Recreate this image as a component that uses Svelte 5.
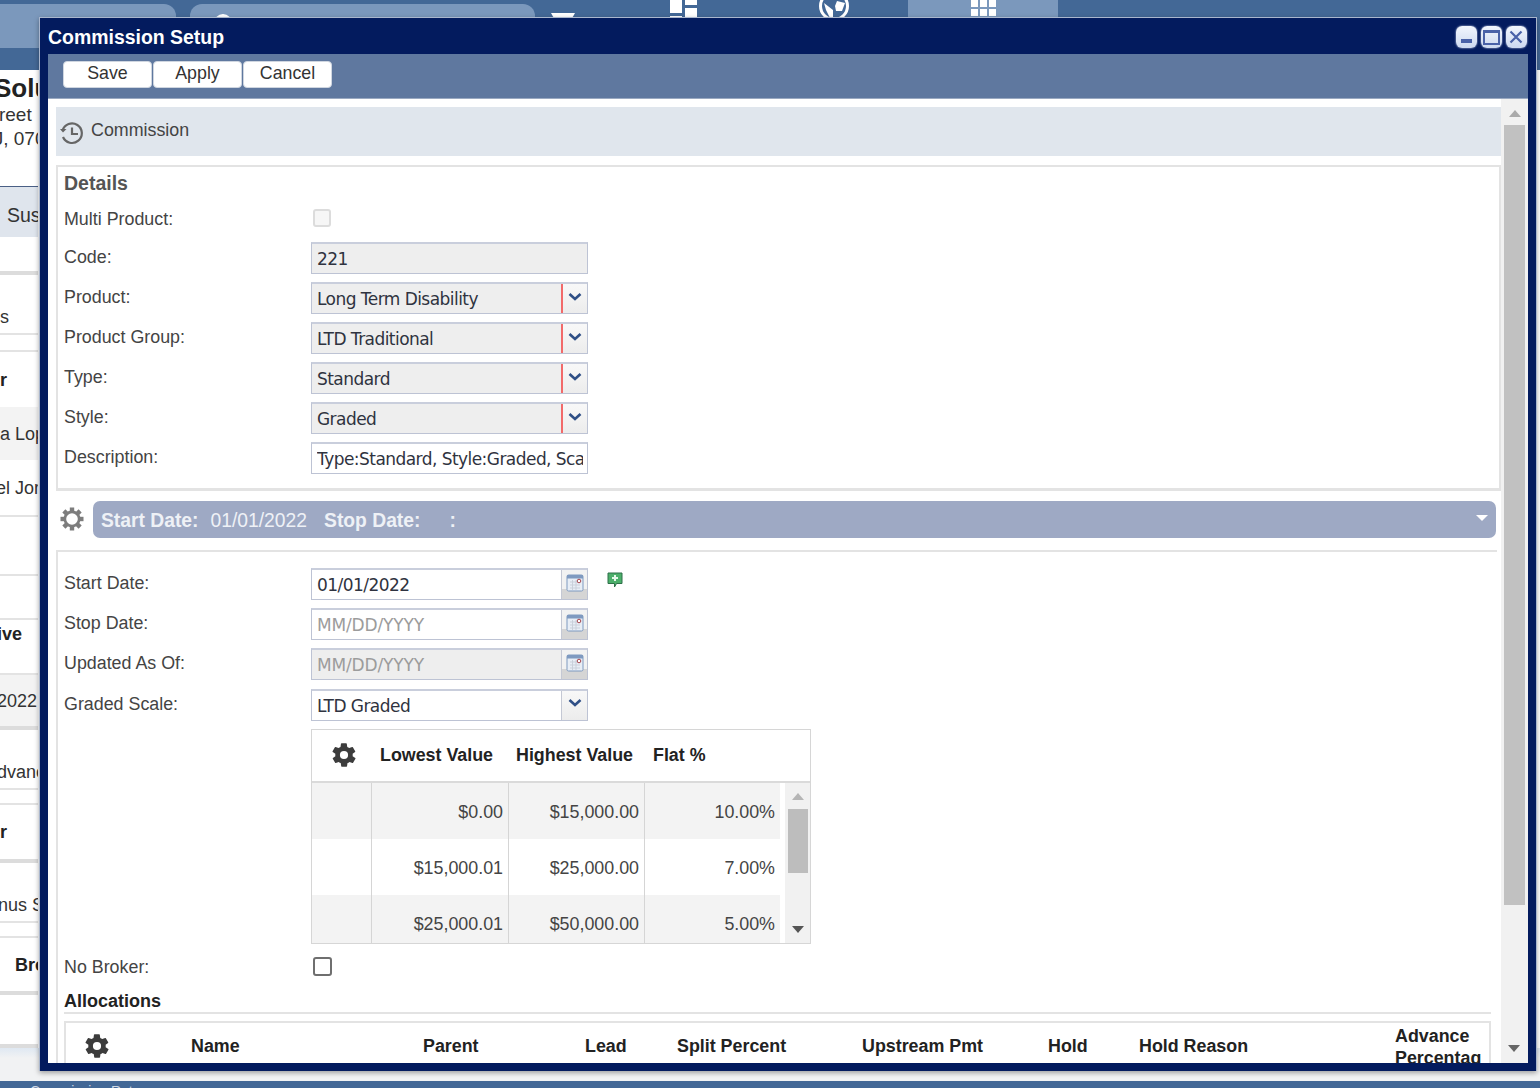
<script>
  const bgRows = [
    { h: 38, t: '', c: 'line2' },
    { h: 60, t: 's', c: 'low line' },
    { h: 17, t: '', c: 'line' },
    { h: 55, t: 'r', c: 'b' },
    { h: 53, t: 'a Lop', c: 'grey' },
    { h: 57, t: 'el Jor', c: 'line', x: -4 },
    { h: 59, t: '', c: 'line' },
    { h: 44, t: '', c: 'line' },
    { h: 55, t: 'ive', c: 'high b line', x: -3 },
    { h: 55, t: '2022', c: 'grey line2', x: -3 },
    { h: 60, t: 'dvance', c: 'low line', x: -3 },
    { h: 15, t: '', c: 'line' },
    { h: 58, t: 'r', c: 'b line2' },
    { h: 60, t: 'nus S', c: 'low line', x: -2 },
    { h: 15, t: '', c: 'line' },
    { h: 57, t: 'Broker', c: 'b line2', x: 15 },
    { h: 53, t: '', c: 'line2' }
  ];
  const details = [
    { l: 'Code:', v: '221', k: 'off' },
    { l: 'Product:', v: 'Long Term Disability', k: 'off', sel: true, req: true },
    { l: 'Product Group:', v: 'LTD Traditional', k: 'off', sel: true, req: true },
    { l: 'Type:', v: 'Standard', k: 'off', sel: true, req: true },
    { l: 'Style:', v: 'Graded', k: 'off', sel: true, req: true },
    { l: 'Description:', v: 'Type:Standard, Style:Graded, Scale:LTD Graded', k: '' }
  ];
  const dates = [
    { l: 'Start Date:', v: '01/01/2022', k: '', cal: true, add: true },
    { l: 'Stop Date:', v: 'MM/DD/YYYY', k: 'ph', cal: true },
    { l: 'Updated As Of:', v: 'MM/DD/YYYY', k: 'off ph', cal: true },
    { l: 'Graded Scale:', v: 'LTD Graded', k: '', sel: true }
  ];
  const scale = [
    ['$0.00', '$15,000.00', '10.00%'],
    ['$15,000.01', '$25,000.00', '7.00%'],
    ['$25,000.01', '$50,000.00', '5.00%']
  ];
  const cols = [
    ['Name', 232], ['Parent', 162], ['Lead', 92], ['Split Percent', 185],
    ['Upstream Pmt', 186], ['Hold', 91], ['Hold Reason', 256]
  ];
  const gear = 'M19.4 13a7.6 7.6 0 0 0 0-2l2.1-1.6a.5.5 0 0 0 .1-.6l-2-3.5a.5.5 0 0 0-.6-.2l-2.5 1a7.3 7.3 0 0 0-1.7-1l-.4-2.7a.5.5 0 0 0-.5-.4h-4a.5.5 0 0 0-.5.4l-.4 2.7a7.3 7.3 0 0 0-1.7 1l-2.5-1a.5.5 0 0 0-.6.2l-2 3.5a.5.5 0 0 0 .1.6L4.6 11a7.6 7.6 0 0 0 0 2l-2.1 1.6a.5.5 0 0 0-.1.6l2 3.5a.5.5 0 0 0 .6.2l2.5-1a7.3 7.3 0 0 0 1.7 1l.4 2.7a.5.5 0 0 0 .5.4h4a.5.5 0 0 0 .5-.4l.4-2.7a7.3 7.3 0 0 0 1.7-1l2.5 1a.5.5 0 0 0 .6-.2l2-3.5a.5.5 0 0 0-.1-.6zM12 15.500a3.500 3.500 0 1 1 0-7 3.500 3.500 0 0 1 0 7z';
</script>

{#snippet field(f)}
  <div class="frow">
    <span class="flabel">{f.l}</span>
    <div class="fbox {f.k}" class:req={f.req}>
      <span class="fval">{f.v}</span>
      {#if f.sel}
        <span class="fbtn"><svg width="14" height="8" viewBox="0 0 14 8"><path d="M1.500 1 7 6l5.500-5" fill="none" stroke="#2f4f86" stroke-width="2.600"/></svg></span>
      {/if}
      {#if f.cal}
        <span class="fbtn cal"><svg width="18" height="18" viewBox="0 0 18 18">
          <rect x="1" y="1" width="16" height="16" rx="1.500" fill="#e8eef6" stroke="#7f9ac0"/>
          <rect x="1" y="1" width="16" height="3.500" fill="#7f9ac0"/>
          <path d="M4 8h10M4 11h10M4 14h10M6.500 6v10M10 6v10" stroke="#c9d0da" stroke-width="1"/>
          <circle cx="13" cy="7" r="1.800" fill="#fff" stroke="#a5444c" stroke-width="1"/>
        </svg></span>
      {/if}
    </div>
    {#if f.add}
      <svg class="addi" width="17" height="16" viewBox="0 0 17 16">
        <path d="M1 1h14v10.500H9.500L7.500 15v-3.500H1z" fill="#4caf6a" stroke="#2d6f48" stroke-width="1"/>
        <path d="M8 3v6M5 6h6" stroke="#e6f7ea" stroke-width="2"/>
      </svg>
    {/if}
  </div>
{/snippet}

<div class="page">
  <header class="top">
    <div class="tabs">
      <div class="tab t1"></div>
      <div class="tab t2"><svg class="tabic" width="24" height="14" viewBox="0 0 24 14"><circle cx="11" cy="11" r="7.500" fill="none" stroke="#fff" stroke-width="3"/></svg></div>
      <svg class="filt" width="26" height="14" viewBox="0 0 26 14"><path d="M1 0h24L17 14H9z" fill="#fff"/></svg>
      <svg class="dash" width="30" height="19" viewBox="0 0 30 19"><path d="M1 0h12v13H1zM1 16h12v3H1zM16 0h12v5H16zM16 8h12v11H16z" fill="#fff"/></svg>
      <svg class="globe" width="32" height="19" viewBox="0 0 32 19"><circle cx="16" cy="6" r="13.500" fill="none" stroke="#fff" stroke-width="3"/><path d="M6 3l9 7v8h-3l-4-8zM19 1l8 2-3 8h-6l-1-5z" fill="#fff"/></svg>
      <div class="navsel"><span class="grid"><i></i><i></i><i></i><i></i><i></i><i></i></span></div>
    </div>
  </header>

  <section class="company">
    <div class="cname">Solutions</div>
    <div class="cline">Street</div>
    <div class="cline">NJ, 07000</div>
  </section>

  <div class="bgcol">
    <div class="sus">Suspense</div>
    {#each bgRows as r}
      <div class="bgrow {r.c}" style="height:{r.h}px;text-indent:{r.x || 0}px">{r.t}</div>
    {/each}
  </div>

  <div class="pagefoot"></div>
  <div class="pagebar">Commission Rates</div>

  <div class="win">
    <div class="wtitle">
      <span class="wname">Commission Setup</span>
      <div class="wbtns">
        <span class="wb"><i class="mn"></i></span>
        <span class="wb"><i class="mx"></i></span>
        <span class="wb cl"><svg width="16" height="16" viewBox="0 0 16 16"><path d="M2.500 2.500l11 11M13.500 2.500l-11 11" stroke="#4a62a8" stroke-width="2.200"/></svg></span>
      </div>
    </div>
    <div class="wtools">
      <button>Save</button><button>Apply</button><button>Cancel</button>
    </div>

    <div class="wbody">
      <div class="scroll">
        <div class="crumb">
          <svg width="24" height="24" viewBox="0 0 24 24"><path d="M2.600 9.500A9.800 9.800 0 1 1 3 16" fill="none" stroke="#666" stroke-width="2.200"/><path d="M0 8l3 3.500L6.500 8z" fill="#666"/><path d="M12 6.500V13h6" fill="none" stroke="#666" stroke-width="2.200"/></svg>
          <span>Commission</span>
        </div>

        <fieldset class="panel det">
          <div class="ptitle">Details</div>
          <div class="frow mp">
            <span class="flabel">Multi Product:</span>
            <span class="check dim"></span>
          </div>
          {#each details as f}{@render field(f)}{/each}
        </fieldset>

        <div class="datebar">
          <svg width="26" height="26" viewBox="0 0 26 26">
            {#each [0, 45, 90, 135] as a}
              <rect x="10.800" y="1.500" width="4.400" height="23" fill="#7d7d7d" transform="rotate({a} 13 13)"/>
            {/each}
            <circle cx="13" cy="13" r="8.500" fill="#7d7d7d"/>
            <circle cx="13" cy="13" r="5.800" fill="#fff"/>
          </svg>
          <div class="dpill">
            <b>Start Date:</b><span class="d1">01/01/2022</span><b class="d2">Stop Date:</b><span class="d3">:</span>
            <svg class="dcar" width="12" height="6" viewBox="0 0 12 6"><path d="M0 0h12L6 6z" fill="#fff"/></svg>
          </div>
        </div>

        <fieldset class="panel dt">
          {#each dates as f}{@render field(f)}{/each}

          <div class="grid-wrap">
            <div class="ghead">
              <svg class="gg" width="28" height="28" viewBox="0 0 24 24"><path d={gear} fill="#3c3c3c"/></svg>
              <b class="h1">Lowest Value</b><b class="h2">Highest Value</b><b class="h3">Flat %</b>
            </div>
            <div class="gbody">
              <div class="gcells">
                {#each scale as row}
                  <div class="grow">
                    <span class="c0"></span>
                    <span class="c1">{row[0]}</span>
                    <span class="c2">{row[1]}</span>
                    <span class="c3">{row[2]}</span>
                  </div>
                {/each}
              </div>
              <div class="gsb">
                <svg class="up" width="12" height="7" viewBox="0 0 12 7"><path d="M6 0l6 7H0z" fill="#b5b5b5"/></svg>
                <span class="thumb"></span>
                <svg class="dn" width="12" height="7" viewBox="0 0 12 7"><path d="M0 0h12L6 7z" fill="#555"/></svg>
              </div>
            </div>
          </div>

          <div class="frow nb">
            <span class="flabel">No Broker:</span>
            <span class="check"></span>
          </div>

          <div class="alloc">Allocations</div>
          <div class="athead">
            <svg class="ag" width="28" height="28" viewBox="0 0 24 24"><path d={gear} fill="#3c3c3c"/></svg>
            {#each cols as c}
              <b style="width:{c[1]}px">{c[0]}</b>
            {/each}
            <b class="adv">Advance Percentage</b>
          </div>
        </fieldset>
      </div>
      <div class="vsb">
        <svg width="12" height="7" viewBox="0 0 12 7"><path d="M6 0l6 7H0z" fill="#aaa"/></svg>
        <span class="vthumb"></span>
        <svg class="vdn" width="12" height="7" viewBox="0 0 12 7"><path d="M0 0h12L6 7z" fill="#666"/></svg>
      </div>
    </div>
  </div>
</div>

<style>
  :global(body) { margin: 0; font-family: "Liberation Sans", Arial, sans-serif; background: #fff; }
  .page { position: relative; width: 1540px; height: 1088px; overflow: hidden; background: #fff; color: #333; font-size: 17.850px; }
  .top { height: 70px; background: #436896; }
  .tabs { position: relative; height: 48px; }
  .tab { position: absolute; top: 4px; height: 44px; background: #7b98bc; border-radius: 0 12px 0 0; }
  .t1 { left: 0; width: 176px; }
  .t2 { left: 190px; width: 345px; border-radius: 12px 12px 0 0; }
  .tabic { position: absolute; left: 22px; top: 8px; }
  .filt { position: absolute; left: 550px; top: 13px; }
  .dash { position: absolute; left: 669px; top: 0; }
  .globe { position: absolute; left: 818px; top: 0; }
  .navsel { position: absolute; left: 908px; top: 0; width: 150px; height: 48px; background: #7b98bc; }
  .grid { position: absolute; left: 63px; top: 0; width: 25px; display: grid; grid-template-columns: repeat(3, 7px); gap: 2px; }
  .grid i { display: block; height: 7px; background: #fff; }
  .company { width: 38px; height: 117px; box-sizing: border-box; padding-top: 3px; border-bottom: 1px solid #4a5f85; overflow: hidden; white-space: nowrap; }
  .cname { font-weight: 700; font-size: 26px; line-height: 30px; margin-left: -6px; color: #222; }
  .cline { font-size: 19px; line-height: 24px; margin-left: -20px; }
  .company .cline:nth-child(2) { margin-left: -19px; }
  .bgcol { width: 38px; overflow: hidden; white-space: nowrap; }
  .sus { height: 50px; line-height: 57px; font-size: 19.500px; background: #dfe5ed; padding-left: 7px; }
  .bgrow { box-sizing: border-box; line-height: 1; display: flex; align-items: center; font-size: 18px; }
  .b { font-weight: 700; color: #222; }
  .grey { background: #f3f3f3; }
  .line { border-bottom: 2px solid #e3e3e3; }
  .line2 { border-bottom: 4px solid #dcdcdc; }
  .low { padding-top: 26px; }
  .high { padding-bottom: 26px; }
  .pagefoot { height: 33px; background: linear-gradient(#dfe8f2, #f1f2f3 30%); }
  .pagebar { height: 7px; overflow: hidden; background: #436896; color: #cfd9e6; font-size: 14px; line-height: 20px; padding-left: 30px; }

  .win { position: absolute; left: 39px; top: 17px; width: 1498px; height: 1054px; box-sizing: border-box; background: #031b5e; border: 1px solid #a9b6cd; border-bottom: 0; padding: 0 8px 8px 8px; display: flex; flex-direction: column; box-shadow: 0 2px 5px rgba(0,0,0,.35); }
  .wtitle { height: 36px; display: flex; align-items: center; justify-content: space-between; flex: none; }
  .wname { color: #fff; font-weight: 700; font-size: 19.450px; margin-top: 2px; }
  .wbtns { display: flex; gap: 3.500px; margin-right: 1px; margin-top: 2px; }
  .wb { width: 21.500px; height: 22px; box-sizing: border-box; background: linear-gradient(#f2f6fd, #cdd9f0); border-radius: 6px; box-shadow: 0 0 2px #dfe8fb; display: flex; align-items: center; justify-content: center; }
  .mn { display: block; width: 11px; height: 4px; background: #4a62a8; margin-top: 7px; }
  .mx { display: block; width: 13px; height: 10px; border: 2px solid #4a62a8; border-top-width: 3px; }
  .wtools { height: 45px; flex: none; box-sizing: border-box; background: #5f789f; border-bottom: 1px solid #9aa9c1; padding: 7px 0 0 15px; display: flex; gap: 1px; }
  .wtools button { height: 27px; width: 89px; font: 17.800px "Liberation Sans", Arial, sans-serif; color: #333; background: #fff; border: 1px solid #cfd6e0; border-radius: 4px; padding: 0 0 3px 0; }
  .wbody { flex: 1; min-height: 0; background: #fff; display: flex; }
  .scroll { flex: 1; min-width: 0; overflow: hidden; padding: 8px 0 0 8px; }
  .vsb { width: 27px; flex: none; background: #f1f1f1; position: relative; display: flex; flex-direction: column; align-items: center; box-sizing: border-box; padding: 11px 0 0 0; }
  .vthumb { width: 21px; height: 780px; background: #c1c1c1; margin-top: 8px; }
  .vdn { position: absolute; bottom: 11px; left: 7px; }
  .crumb { height: 49px; background: #e0e6ed; display: flex; align-items: center; gap: 7px; padding-left: 4px; color: #444; width: 1445px; box-sizing: border-box; }
  .crumb svg { margin-top: 3px; }
  .crumb span { margin-top: -3px; }
  .panel { border: 0; margin: 0; padding: 0; box-sizing: border-box; width: 1445px; }
  .det { margin-top: 9px; height: 326px; border: 2px solid #e3e3e3; border-bottom-width: 3px; padding: 5px 0 0 6px; }
  .ptitle { font-weight: 700; font-size: 19.500px; color: #555; line-height: 22px; margin-bottom: 14px; }
  .frow { display: flex; height: 40px; align-items: flex-start; position: relative; }
  .flabel { width: 247px; flex: none; line-height: 22px; color: #444; padding-top: 4px; }
  .mp { height: 34px; }
  .mp .flabel { padding-top: 0; }
  .check { width: 19px; height: 19px; box-sizing: border-box; border: 2px solid #6f6f6f; border-radius: 3px; display: block; background: #fff; margin: 1px 0 0 2px; }
  .check.dim { border-color: #dcdcdc; background: #f6f6f6; width: 18px; height: 18px; }
  .fbox { width: 277px; height: 32px; box-sizing: border-box; border: 1px solid #bdc3d4; border-top: 2px solid #c9cedc; display: flex; background: #fff; overflow: hidden; }
  .fbox.off { background: #eeeeee; }
  .fval { flex: 1; min-width: 0; margin: 4px 4px 0 5px; line-height: 22px; font-family: "DejaVu Sans", sans-serif; font-size: 17px; color: #2f3340; white-space: nowrap; overflow: hidden; letter-spacing: -.55px; }
  .ph .fval { color: #9c9c9c; letter-spacing: -.15px; }
  .fbtn { width: 25px; flex: none; border-left: 1px solid #c4c8d4; background: linear-gradient(#f8f8f8, #ececec); display: flex; align-items: center; justify-content: center; padding-bottom: 4px; }
  .fbox.req .fbtn { border-left: 2px solid #f26a6a; width: 24px; }
  .fbtn.cal { background: linear-gradient(#f2f2f2 65%, #d5d5d5 65%); padding: 0 0 4px 0; }
  .addi { margin: 4px 0 0 19px; }
  .datebar { display: flex; align-items: center; margin-top: 9px; height: 38px; padding-left: 3px; gap: 8px; }
  .dpill { position: relative; width: 1403px; height: 37px; background: #9ea9c4; border-radius: 7px; display: flex; align-items: center; color: #eef1f6; font-size: 19.300px; padding: 3px 0 0 8px; box-sizing: border-box; }
  .dpill b { color: #eef1f6; }
  .d1 { margin-left: 12px; }
  .d2 { margin-left: 17px; }
  .d3 { margin-left: 29px; font-weight: 700; }
  .dcar { position: absolute; right: 8px; top: 14px; }
  .dt { margin-top: 12px; border: 2px solid #e3e3e3; border-right: 0; border-bottom: 0; padding: 16px 0 0 6px; height: 530px; width: 1441px; }
  .dt .frow { height: 40.200px; }
  .grid-wrap { margin-left: 247px; width: 500px; height: 215px; box-sizing: border-box; border: 1px solid #d6d6d6; }
  .ghead { height: 53px; box-sizing: border-box; border-bottom: 2px solid #dadada; position: relative; color: #222; }
  .ghead b { position: absolute; top: 14px; line-height: 22px; }
  .gg { position: absolute; left: 18px; top: 11px; }
  .h1 { left: 68px; } .h2 { left: 204px; } .h3 { left: 341px; }
  .gbody { display: flex; height: 160px; overflow: hidden; }
  .gcells { width: 468px; flex: none; }
  .grow { display: flex; height: 56px; background: #fff; }
  .grow:nth-child(odd) { background: #f3f3f3; }
  .grow span { box-sizing: border-box; border-right: 1px solid #d5d5d5; text-align: right; padding: 18px 5px 0 0; line-height: 22px; color: #444; }
  .c0 { width: 60px; } .c1 { width: 137px; } .c2 { width: 136px; } .c3 { width: 135px; border-right: 0 !important; }
  .gsb { position: relative; flex: 1; margin-left: 5px; background: #f1f1f1; display: flex; flex-direction: column; align-items: center; padding-top: 10px; }
  .thumb { display: block; width: 20px; height: 64px; background: #bdbdbd; margin-top: 9px; }
  .dn { position: absolute; bottom: 10px; left: 7px; }
  .dt .nb { margin-top: 12px; height: 34px; }
  .nb .flabel { padding-top: 0; }
  .alloc { font-weight: 700; font-size: 18px; color: #222; line-height: 22px; height: 22px; border-bottom: 2px solid #e3e3e3; width: 1427px; }
  .athead { margin-top: 7px; height: 60px; border: 2px solid #e3e3e3; border-bottom: 0; width: 1427px; box-sizing: border-box; display: flex; position: relative; padding: 12px 0 0 125px; color: #222; white-space: nowrap; }
  .athead b { display: block; flex: none; line-height: 22px; }
  .athead .adv { width: 86px; white-space: normal; overflow: hidden; height: 44px; margin-top: -10px; }
  .ag { position: absolute; left: 17px; top: 9px; }
</style>
